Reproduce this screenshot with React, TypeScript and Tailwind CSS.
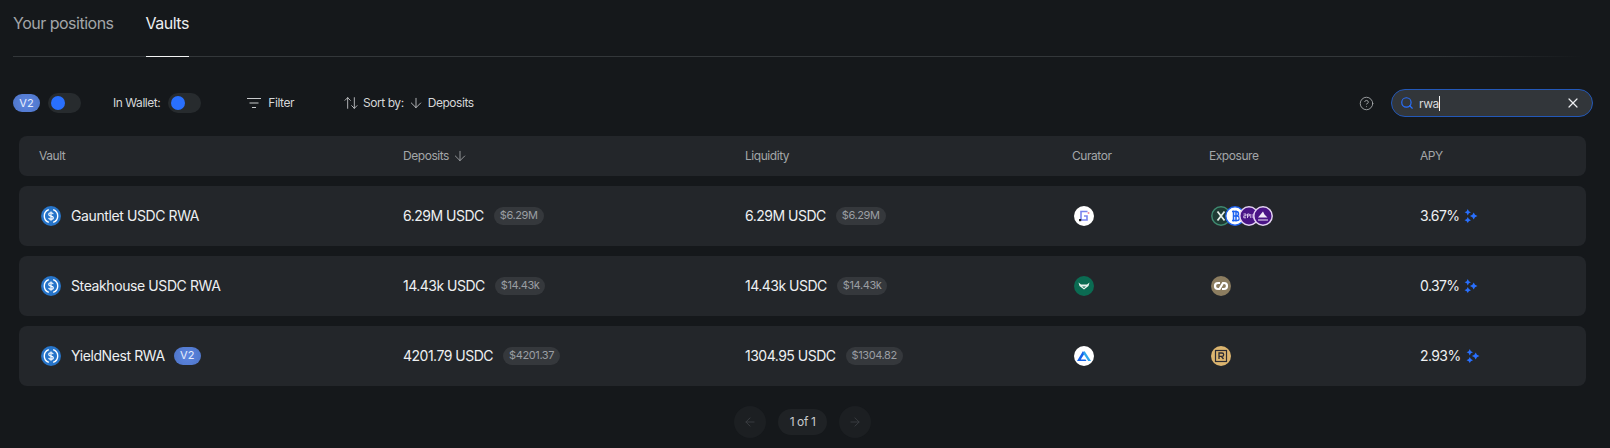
import React from "react";
import { ArrowDown, ArrowLeft, ArrowRight, ArrowUpDown, CircleHelp, Search, X } from "lucide-react";

function V2({ className = "" }: { className?: string }) {
  return (
    <span className={`inline-flex h-[18px] w-[27px] items-center justify-center rounded-full bg-[radial-gradient(circle_at_50%_50%,#5d86e0,#4d74c8)] text-[11px] tracking-normal text-[#e8eefc] ${className}`}>
      V2
    </span>
  );
}

function Toggle() {
  return (
    <span className="flex h-[20px] w-[33px] items-center rounded-full bg-[#272b2e] pl-[3px]">
      <span className="h-[14px] w-[14px] rounded-full bg-[#2970ff]" />
    </span>
  );
}

function Usdc() {
  return (
    <svg width="20" height="20" viewBox="0 0 32 32" className="shrink-0">
      <circle cx="16" cy="16" r="16" fill="#2775ca" />
      <path d="M12.500 5.800a10.800 10.800 0 0 0 0 20.400M19.500 5.800a10.800 10.800 0 0 1 0 20.400" fill="none" stroke="#fff" strokeWidth="2.200" />
      <path d="M19.600 12.900c-.4-1.500-1.800-2.200-3.600-2.200-2.100 0-3.600 1-3.600 2.700 0 3.900 7.300 1.700 7.300 5.300 0 1.700-1.600 2.700-3.700 2.700-2 0-3.400-.9-3.800-2.500M16 8.600v14.800" fill="none" stroke="#fff" strokeWidth="1.800" />
    </svg>
  );
}

function Sparkles() {
  return (
    <svg width="14" height="14" viewBox="0 0 13 13" fill="#2970ff" className="ml-[5px]">
      <path d="M3.500 0l1 2 2 1-2 1-1 2-1-2-2-1 2-1zM9 3.200l1.200 2.100 2.300 1.200-2.300 1.200L9 9.800 7.800 7.700 5.500 6.500l2.300-1.200zM3.500 7.500l1 1.900 2 1-2 1-1 1.600-1-1.600-2-1 2-1z" />
    </svg>
  );
}

function Logo({ children, className = "" }: { children: React.ReactNode; className?: string }) {
  return (
    <svg width="20" height="20" viewBox="0 0 20 20" className={`shrink-0 ${className}`}>
      {children}
    </svg>
  );
}

const Gauntlet = (
  <Logo>
    <circle cx="10" cy="10" r="10" fill="#fff" />
    <path d="M13.500 5.500H7v8.500h6v-4h-3" fill="none" stroke="#7b84ee" strokeWidth="1.600" />
    <circle cx="14.500" cy="7" r="1" fill="#f08aa0" />
    <rect x="5" y="13" width="2.200" height="2.200" fill="#222" />
  </Logo>
);
const Steakhouse = (
  <Logo>
    <circle cx="10" cy="10" r="10" fill="#0b6b52" />
    <path d="M4.500 6.500l2.500 2h6l2.500-2-1 3.500-4.500 3.500L5.500 10z" fill="#e8f2ee" />
    <path d="M8 10.500h4l-2 1.500z" fill="#0b6b52" />
  </Logo>
);
const Yieldnest = (
  <Logo>
    <circle cx="10" cy="10" r="10" fill="#fff" />
    <path d="M3 15L9 5l1.600 2.600L6.800 13.500h4.700l1 1.500z" fill="#1463ea" />
    <path d="M10.500 5l6.500 10h-2.800L9.200 7.200z" fill="#2ba6ee" />
  </Logo>
);
const Link = (
  <Logo>
    <circle cx="10" cy="10" r="10" fill="#8c7d60" />
    <path d="M9 7H7a3 3 0 0 0 0 6h1.500L12 7h1a3 3 0 0 1 0 6h-2" fill="none" stroke="#fff" strokeWidth="2.200" />
  </Logo>
);
const Realt = (
  <Logo>
    <circle cx="10" cy="10" r="10" fill="#dcb56f" />
    <rect x="4.500" y="4.500" width="11" height="11" fill="none" stroke="#2b2b33" strokeWidth="1.200" />
    <path d="M8 13V7h3a1.600 1.600 0 0 1 0 3.400H8M10.500 10.500l2 2.500" fill="none" stroke="#2b2b33" strokeWidth="1.300" />
  </Logo>
);

const Gauntlet4 = (
  <div className="flex">
    <Logo>
      <circle cx="10" cy="10" r="9.200" fill="#1f3b34" stroke="#3f8a70" strokeWidth="1.400" />
      <path d="M6.500 5.500l7 9M13.500 5.500l-7 9" stroke="#e5efe9" strokeWidth="1.800" />
    </Logo>
    <Logo className="-ml-[6px]">
      <circle cx="10" cy="10" r="9.200" fill="#fff" stroke="#1e62f0" strokeWidth="1.400" />
      <path d="M8.500 4.500v11M11 4.500v11M7 5.500h4.200a2.200 2.200 0 0 1 0 4.500H8h4a2.300 2.300 0 0 1 0 4.600H7" fill="none" stroke="#1e62f0" strokeWidth="1.500" />
    </Logo>
    <Logo className="-ml-[6px]">
      <circle cx="10" cy="10" r="9.200" fill="#4a1486" stroke="#e3d2f2" strokeWidth="1.500" />
      <path d="M4.500 8h2.500v1.800H4.800v2H7M8.500 12V8h1.800v2H8.500M11.800 8v4M14 8h1.500M14 12h1.500M14 8v4" fill="none" stroke="#e3d2f2" strokeWidth="0.900" />
    </Logo>
    <Logo className="-ml-[6px]">
      <circle cx="10" cy="10" r="9.200" fill="#4a1486" stroke="#e3d2f2" strokeWidth="1.500" />
      <path d="M5 11.500L10 5.500l1.500 3 3 3z" fill="#f1e8f8" />
      <path d="M5 14h10" stroke="#f1e8f8" strokeWidth="1" />
    </Logo>
  </div>
);

const cols = "grid grid-cols-[364px_342px_327px_137px_211px_1fr] items-center px-5";

function Amount({ value, usd }: { value: string; usd: string }) {
  return (
    <div className="flex items-center gap-[10px]">
      <span className="text-[14px] tracking-[-0.5px] text-[#eef0f2]">{value}</span>
      <span className="flex h-[18px] items-center rounded-full bg-[#35383c] px-[6px] text-[11px] text-[#9a9ea3]">{usd}</span>
    </div>
  );
}

const rows = [
  { name: "Gauntlet USDC RWA", v2: false, dep: "6.29M USDC", depUsd: "$6.29M", liq: "6.29M USDC", liqUsd: "$6.29M", cur: Gauntlet, exp: Gauntlet4, apy: "3.67%" },
  { name: "Steakhouse USDC RWA", v2: false, dep: "14.43k USDC", depUsd: "$14.43k", liq: "14.43k USDC", liqUsd: "$14.43k", cur: Steakhouse, exp: Link, apy: "0.37%" },
  { name: "YieldNest RWA", v2: true, dep: "4201.79 USDC", depUsd: "$4201.37", liq: "1304.95 USDC", liqUsd: "$1304.82", cur: Yieldnest, exp: Realt, apy: "2.93%" },
];

export default function App() {
  return (
    <div className="h-[448px] overflow-hidden bg-[#15181b] font-['Inter',sans-serif] tracking-[-0.4px] text-[#e4e6e8]">
      <div className="mx-[13px] flex h-[56px] gap-[32px] tracking-[-0.5px]">
        <div className="pt-[12px] text-[16px] leading-[22px] text-[#a3a6a9]">Your positions</div>
        <div className="relative -mb-px border-b border-[#f2f3f4] pt-[12px] text-[16px] leading-[22px] text-[#eceef0]">Vaults</div>
      </div>
      <div className="ml-[13px] h-px w-[1570px] bg-[linear-gradient(to_right,#33373a_90%,transparent)]" />

      <div className="mt-[32px] flex h-[28px] items-center pl-[13px] pr-[17px] text-[12px] tracking-[-0.45px] text-[#d4d6d8]">
        <V2 />
        <span className="ml-[8px]"><Toggle /></span>
        <span className="ml-[32px]">In Wallet:</span>
        <span className="ml-[8px]"><Toggle /></span>
        <svg width="14" height="12" viewBox="0 0 14 12" fill="none" stroke="#c8cacc" strokeWidth="1.200" className="ml-[46px]">
          <path d="M0 1.500h14M2.500 6h9M5 10.500h4" />
        </svg>
        <span className="ml-[7px]">Filter</span>
        <ArrowUpDown size={16} strokeWidth={1.3} className="ml-[49px] text-[#c8cacc]" />
        <span className="ml-[4px]">Sort by:</span>
        <ArrowDown size={16} strokeWidth={1.3} className="ml-[4px] text-[#c8cacc]" />
        <span className="ml-[4px]">Deposits</span>
        <CircleHelp size={15} strokeWidth={1.4} className="ml-auto mr-[17px] text-[#a8abae]" />
        <div className="flex h-[28px] w-[202px] items-center rounded-full border border-[#2358b8] bg-[#32363a] pl-[8px] pr-[11px]">
          <Search size={14} strokeWidth={2} className="text-[#2970ff]" />
          <span className="ml-[5px] border-r border-[#f0f0f0] text-[12px] leading-[15px] text-[#d8dadc]">rwa</span>
          <X size={16} strokeWidth={1.8} className="ml-auto text-[#eceef0]" />
        </div>
      </div>

      <div className="ml-[19px] mt-[19px] flex w-[1567px] flex-col gap-[10px]">
        <div className={`${cols} h-[40px] rounded-[8px] bg-[#23262a] pb-px text-[12px] tracking-[-0.45px] text-[#a3a6a9]`}>
          <div>Vault</div>
          <div className="flex items-center gap-[3px]">
            Deposits <ArrowDown size={16} strokeWidth={1.3} />
          </div>
          <div>Liquidity</div>
          <div>Curator</div>
          <div>Exposure</div>
          <div>APY</div>
        </div>
        {rows.map((r) => (
          <div key={r.name} className={`${cols} h-[60px] rounded-[8px] bg-[#23262a] pb-px`}>
            <div className="flex items-center gap-[10px] pl-[2px] text-[14px] text-[#eef0f2]">
              <Usdc />
              <span>{r.name}</span>
              {r.v2 && <V2 className="-ml-px" />}
            </div>
            <Amount value={r.dep} usd={r.depUsd} />
            <Amount value={r.liq} usd={r.liqUsd} />
            <div className="pl-[2px]">{r.cur}</div>
            <div className="pl-[2px]">{r.exp}</div>
            <div className="flex items-center text-[14px] tracking-[-0.6px] text-[#eef0f2]">
              {r.apy}
              <Sparkles />
            </div>
          </div>
        ))}

        <div className="mt-[10px] flex items-center justify-center gap-[12px]">
          <span className="flex h-[32px] w-[32px] items-center justify-center rounded-full bg-[#1c1f22]">
            <ArrowLeft size={14} strokeWidth={1.5} className="text-[#3b3f43]" />
          </span>
          <span className="flex h-[26px] items-center rounded-full bg-[#1f2225] px-[12px] text-[12px] text-[#c9cbcd]">1 of 1</span>
          <span className="flex h-[32px] w-[32px] items-center justify-center rounded-full bg-[#1c1f22]">
            <ArrowRight size={14} strokeWidth={1.5} className="text-[#3b3f43]" />
          </span>
        </div>
      </div>
    </div>
  );
}
